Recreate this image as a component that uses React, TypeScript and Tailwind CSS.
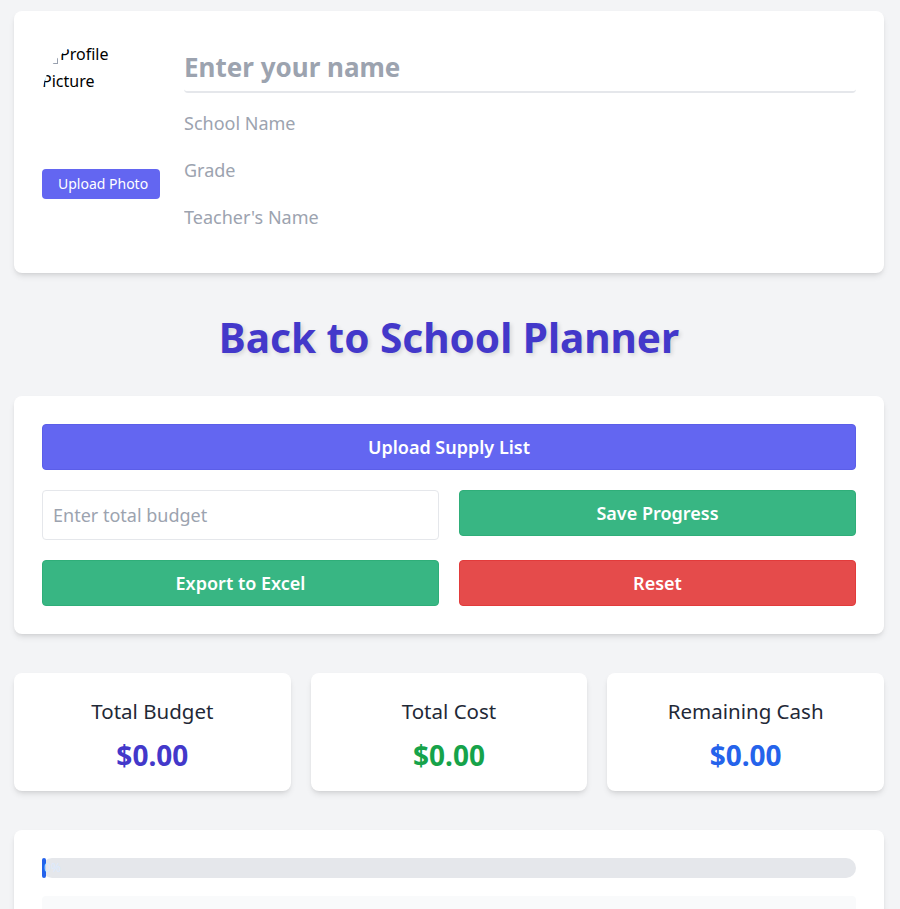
import { FunctionComponent } from "react";

const StatCard: FunctionComponent<{ label: string; value: string; color: string }> = ({
  label,
  value,
  color,
}) => {
  return (
    <div className="bg-white rounded-lg shadow-md pt-6 pb-[18px] flex flex-col items-center">
      <div className="text-[20.5px] leading-7 text-[#1f2937]">{label}</div>
      <div className={`mt-3 text-[28px] leading-9 font-bold ${color}`}>{value}</div>
    </div>
  );
};

const App: FunctionComponent = () => {
  const progress = 0;
  return (
    <div className="min-h-screen bg-[#f3f4f6] pl-[14px] pr-4 pt-[11px] pb-10 font-['Noto_Sans',sans-serif]">
      {/* profile */}
      <div className="bg-white rounded-lg shadow-md p-7 pb-[34px] flex flex-row items-start gap-6">
        <div className="flex flex-col gap-3 w-[118px] shrink-0">
          <div className="w-[118px] h-[118px] rounded-full overflow-hidden text-base leading-[27px] text-black pt-[2px]">
            <span className="inline-block w-4 h-4 align-middle border border-gray-400 mr-0.5" />
            Profile Picture
          </div>
          <button className="bg-[#6366f1] text-white text-sm leading-5 py-[5px] px-4 rounded whitespace-nowrap">
            Upload Photo
          </button>
        </div>
        <div className="flex-1 flex flex-col">
          <input
            className="w-full text-[26px] leading-8 font-bold pt-3 pb-2 border-b-2 border-gray-200 rounded-sm outline-none placeholder:text-[#9ca3af] mb-2"
            placeholder="Enter your name"
            type="text"
          />
          <div className="flex flex-col gap-[3px]">
            <input
              className="w-full text-lg leading-7 py-2 outline-none placeholder:text-[#9ca3af]"
              placeholder="School Name"
              type="text"
            />
            <input
              className="w-full text-lg leading-7 py-2 outline-none placeholder:text-[#9ca3af]"
              placeholder="Grade"
              type="text"
            />
            <input
              className="w-full text-lg leading-7 py-2 outline-none placeholder:text-[#9ca3af]"
              placeholder="Teacher's Name"
              type="text"
            />
          </div>
        </div>
      </div>

      <h1 className="mt-[43px] mb-[36px] text-center text-[40.5px] leading-[44px] font-bold text-[#4338ca] [text-shadow:2px_2px_4px_rgba(0,0,0,0.12)]">
        Back to School Planner
      </h1>

      {/* actions */}
      <div className="bg-white rounded-lg shadow-md p-7 flex flex-col gap-5">
        <button className="w-full bg-[#6366f1] border border-[#5b5ee8] text-white text-lg leading-7 font-semibold py-2 rounded">
          Upload Supply List
        </button>
        <div className="grid grid-cols-2 gap-5 items-start">
          <input
            className="w-full border border-gray-200 rounded px-2.5 py-2.5 text-lg leading-7 outline-none placeholder:text-[#9ca3af]"
            placeholder="Enter total budget"
            type="number"
          />
          <button className="w-full bg-[#38b683] border border-[#2fae79] text-white text-lg leading-7 font-semibold py-2 rounded">
            Save Progress
          </button>
          <button className="w-full bg-[#38b683] border border-[#2fae79] text-white text-lg leading-7 font-semibold py-2 rounded">
            Export to Excel
          </button>
          <button className="w-full bg-[#e54b4b] border border-[#e23b3b] text-white text-lg leading-7 font-semibold py-2 rounded">
            Reset
          </button>
        </div>
      </div>

      {/* totals */}
      <div className="mt-[39px] grid grid-cols-3 gap-5">
        <StatCard label="Total Budget" value="$0.00" color="text-[#4338ca]" />
        <StatCard label="Total Cost" value="$0.00" color="text-[#16a34a]" />
        <StatCard label="Remaining Cash" value="$0.00" color="text-[#2563eb]" />
      </div>

      {/* list */}
      <div className="mt-[39px] bg-white rounded-lg shadow-md p-7">
        <div className="w-full h-5 bg-[#e5e7eb] rounded-full">
          <div
            className="h-full bg-[#2563eb] text-xs leading-4 text-blue-100 text-center p-0.5 rounded-full whitespace-nowrap"
            style={{ width: `${progress}%` }}
          >
            {progress}%
          </div>
        </div>
        <div className="mt-[18px] h-48 bg-[#f9fafb] rounded" />
      </div>
    </div>
  );
};

export default App;
